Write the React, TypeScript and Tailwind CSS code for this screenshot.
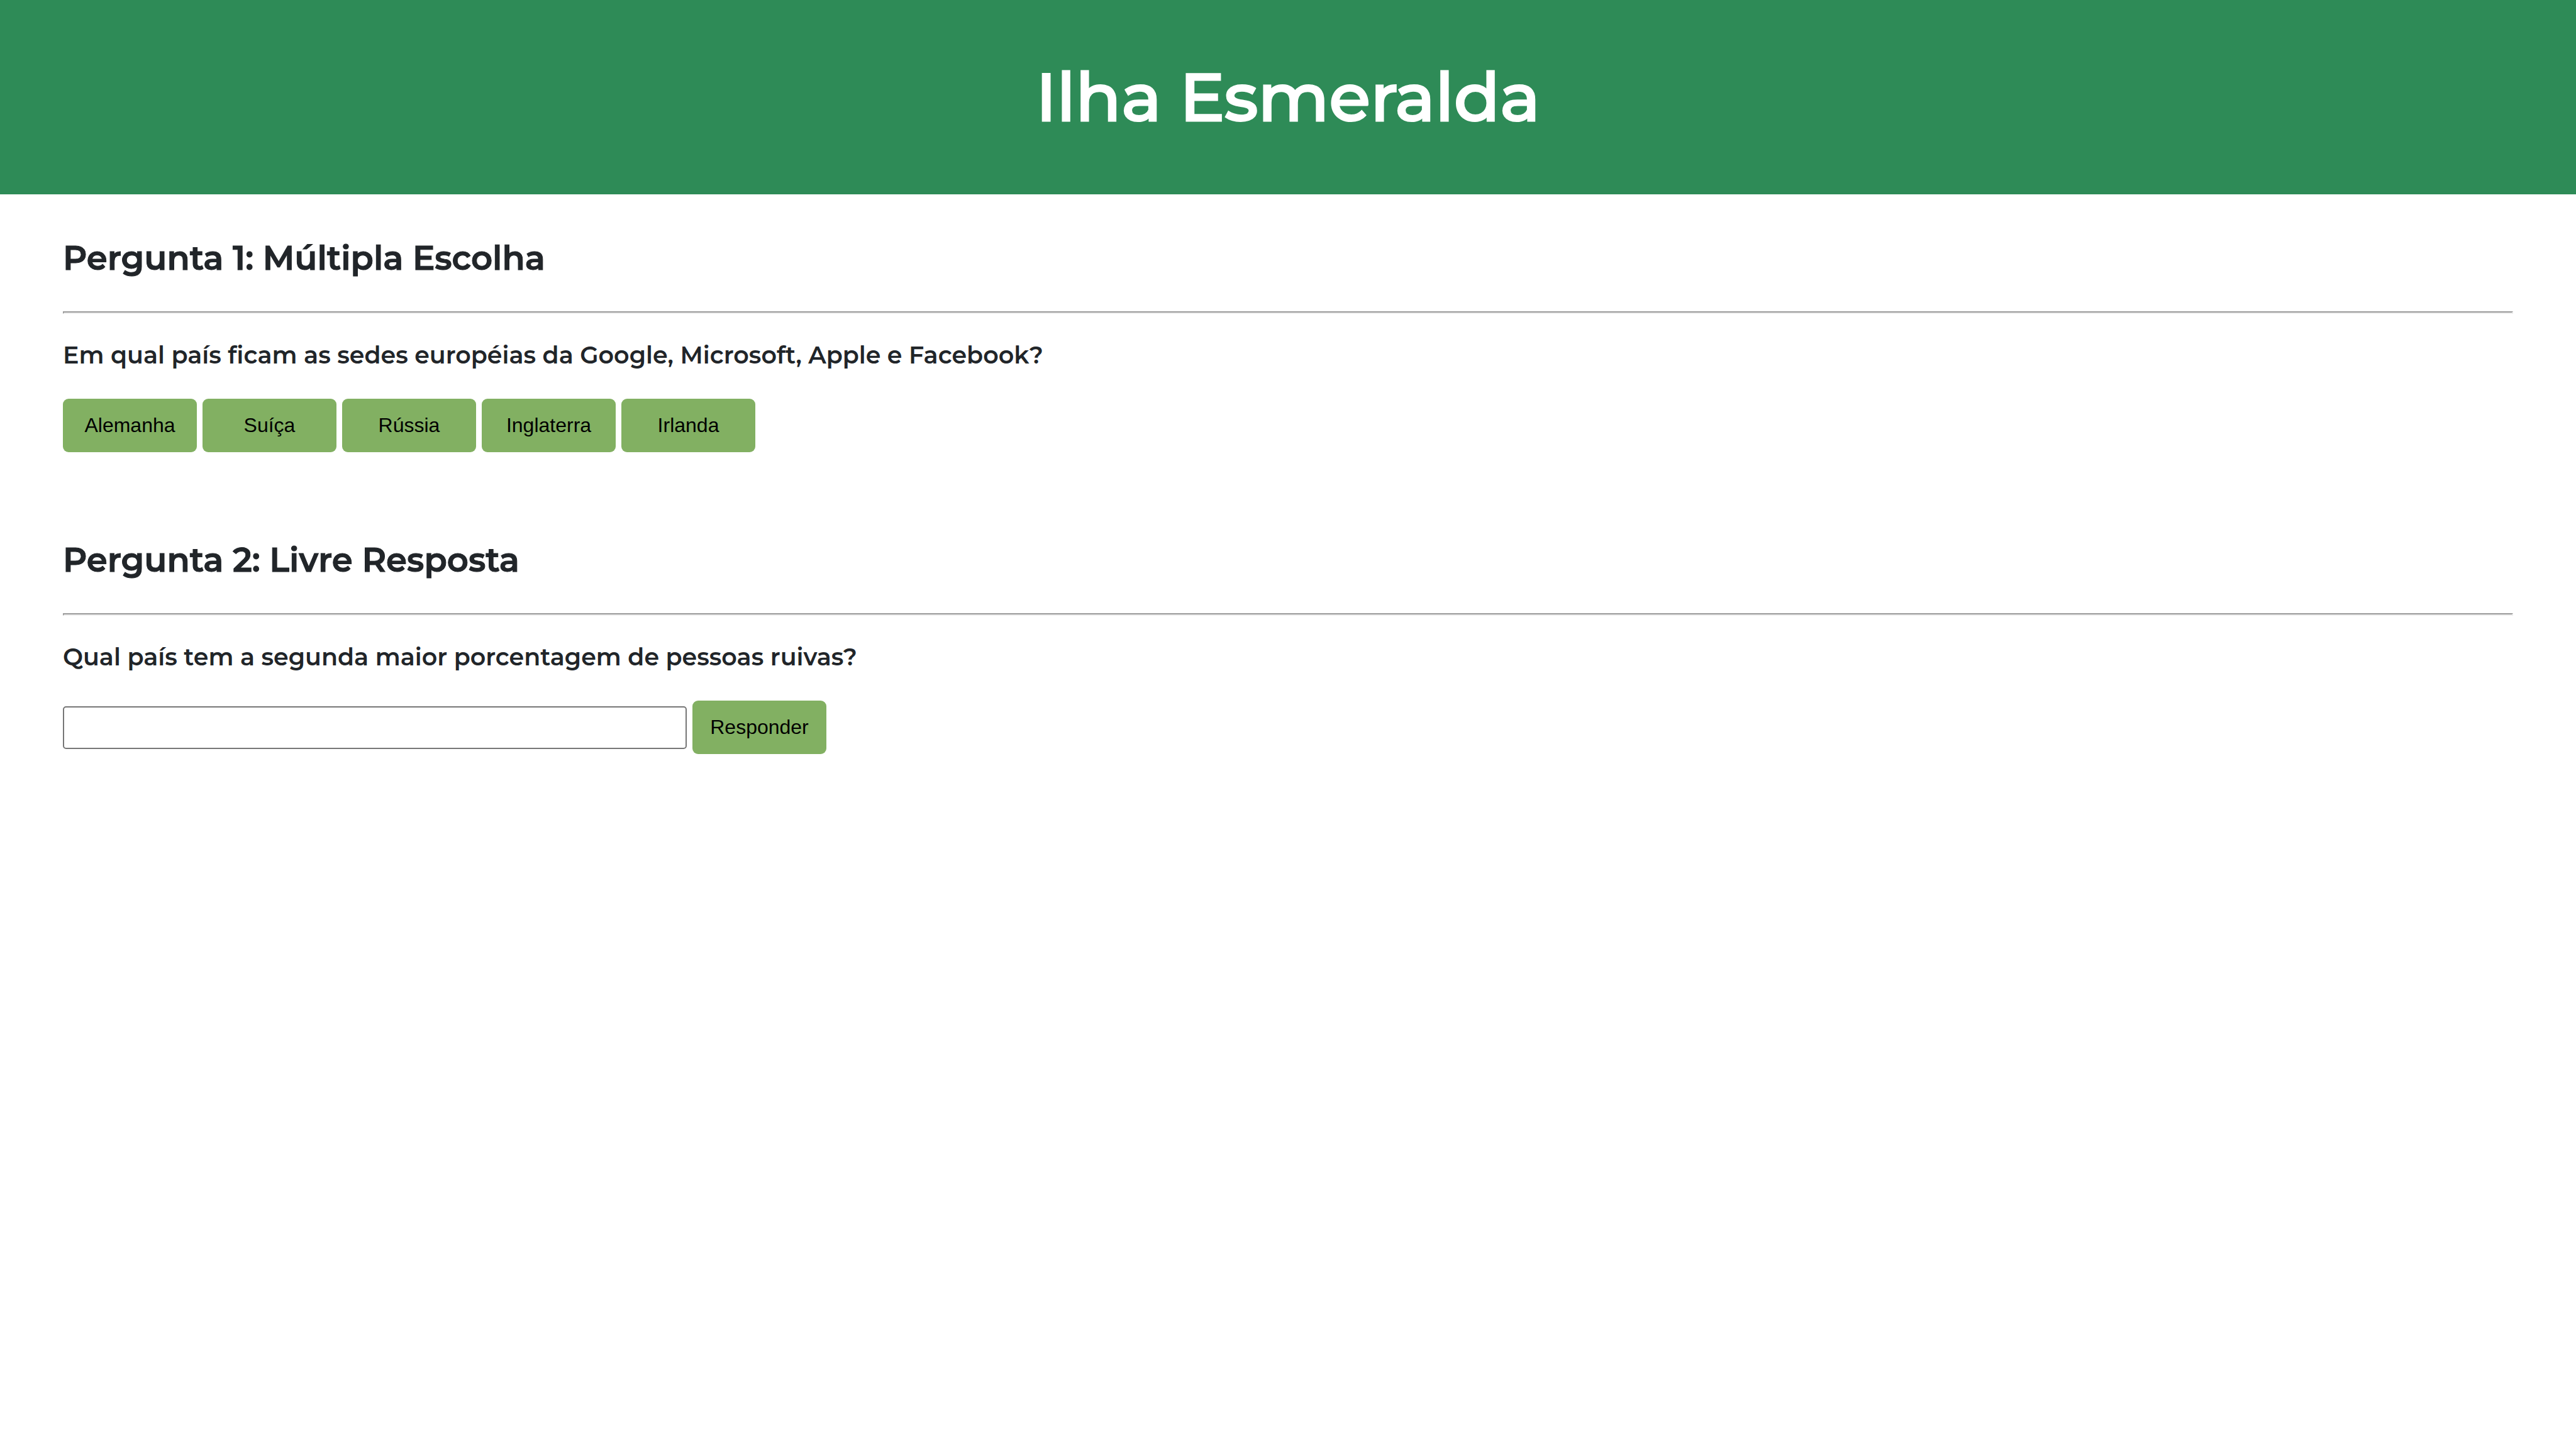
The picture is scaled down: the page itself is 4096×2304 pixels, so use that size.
import type { ReactNode } from "react";

const countries = ["Alemanha", "Suíça", "Rússia", "Inglaterra", "Irlanda"];

function AnswerButton({ children, type = "button" }: { children: ReactNode; type?: "button" | "submit" }) {
  return (
    <button
      type={type}
      className="h-[85px] w-[213px] rounded-[9px] bg-[#82b062] pb-[2px] text-center font-['Liberation_Sans',Arial,sans-serif] text-[32px] text-black"
    >
      {children}
    </button>
  );
}

function Question({ title, prompt, children }: { title: string; prompt: ReactNode; children: ReactNode }) {
  return (
    <section>
      <h2 className="text-[53px] leading-[66px] font-semibold [-webkit-text-stroke:1px]">{title}</h2>
      <hr className="mt-[52px] h-0 border-2 border-t-[#9a9a9a] border-r-[#eeeeee] border-b-[#eeeeee] border-l-[#9a9a9a]" />
      <h3 className="mt-[43px] mb-[46px] text-[38px] leading-[46px] font-semibold">{prompt}</h3>
      {children}
    </section>
  );
}

export default function App() {
  return (
    <div className="min-h-screen bg-white font-['Montserrat','Inter',sans-serif] text-[#212529]">
      <header className="bg-[#2e8b57] pt-[89px] pb-[91px] text-center text-white">
        <h1 className="text-[107px] leading-[129px] font-medium [-webkit-text-stroke:3px]">Ilha Esmeralda</h1>
      </header>
      <main className="flex flex-col gap-[138px] px-[100px] pt-[68px]">
        <Question
          title="Pergunta 1: Múltipla Escolha"
          prompt="Em qual país ficam as sedes européias da Google, Microsoft, Apple e Facebook?"
        >
          <div className="flex flex-wrap gap-[9px]">
            {countries.map((country) => (
              <AnswerButton key={country}>{country}</AnswerButton>
            ))}
          </div>
        </Question>
        <Question
          title="Pergunta 2: Livre Resposta"
          prompt={<label htmlFor="answer">Qual país tem a segunda maior porcentagem de pessoas ruivas?</label>}
        >
          <form className="flex flex-wrap items-center gap-[9px]" onSubmit={(event) => event.preventDefault()}>
            <input
              id="answer"
              type="text"
              className="h-[68px] w-[992px] max-w-full rounded-[5px] border-2 border-[#767676] bg-white px-1 font-['Liberation_Sans',Arial,sans-serif] text-[32px] text-black"
            />
            <AnswerButton type="submit">Responder</AnswerButton>
          </form>
        </Question>
      </main>
    </div>
  );
}
